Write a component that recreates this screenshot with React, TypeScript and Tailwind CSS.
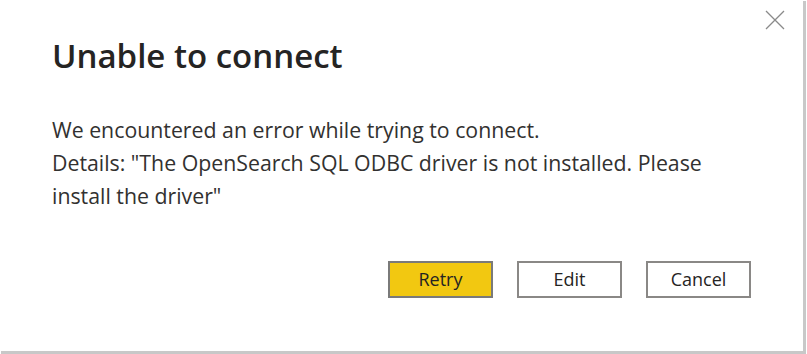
import React from "react";

const font = { fontFamily: '"Open Sans", "Noto Sans", sans-serif' };

function DialogButton({ label, primary }: { label: string; primary?: boolean }) {
  return (
    <button
      className={
        "w-[105px] h-[37px] border-2 text-[18px] text-[#252423] " +
        (primary ? "bg-[#f2c811] border-[#7a7a7a]" : "bg-white border-[#8a8886]")
      }>
      {label}
    </button>
  );
}

export default function App() {
  return (
    <div className="w-[807px] h-[354px] bg-white" style={font}>
      <div className="relative w-[803px] h-[351px] bg-white shadow-[2px_2px_0_1px_#c8c8c8] flex flex-col pl-[52px] pr-[52px]">
        <button className="absolute right-[17px] top-[9px] w-[22px] h-[22px] text-[#8a8a8a]">
          <svg viewBox="0 0 22 22" width="22" height="22" fill="none" stroke="currentColor" strokeWidth="1.3">
            <path d="M2 2 L20 20 M20 2 L2 20" />
          </svg>
        </button>
        <h1 className="mt-[34px] text-[33px] font-semibold text-[#252423] leading-[44px]">Unable to connect</h1>
        <div className="mt-[35px] text-[21.3px] leading-[33px] text-[#323130]">
          <p>We encountered an error while trying to connect.</p>
          <p>Details: "The OpenSearch SQL ODBC driver is not installed. Please install the driver"</p>
        </div>
        <div className="mt-[49px] flex justify-end gap-[24px]">
          <DialogButton label="Retry" primary />
          <DialogButton label="Edit" />
          <DialogButton label="Cancel" />
        </div>
      </div>
    </div>
  );
}
